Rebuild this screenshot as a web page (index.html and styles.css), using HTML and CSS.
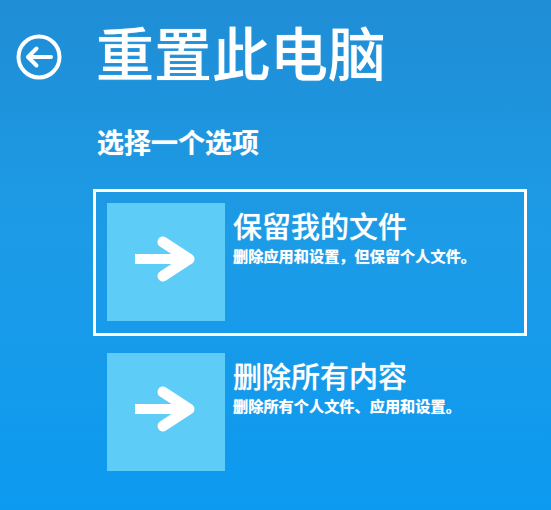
FILE: index.html
```html
<!DOCTYPE html>
<html lang="zh-CN">
<head>
<meta charset="utf-8">
<title>重置此电脑</title>
<link rel="stylesheet" href="styles.css">
</head>
<body>
<div class="page">
  <div class="header">
    <svg class="back" width="48" height="48" viewBox="0 0 48 48">
      <circle cx="24" cy="24" r="20.5" fill="none" stroke="#fff" stroke-width="4"/>
      <path d="M13 24 H36 M21.5 15.5 L13 24 L21.5 32.5" fill="none" stroke="#fff" stroke-width="4" stroke-linecap="round" stroke-linejoin="round"/>
    </svg>
    <h1 class="title">重置此电脑</h1>
  </div>
  <div class="subtitle">选择一个选项</div>
  <div class="options">
    <div class="option selected">
      <div class="tile">
        <svg width="118" height="118" viewBox="0 0 118 118">
          <path d="M28 56 H82" fill="none" stroke="#fff" stroke-width="10"/>
          <path d="M56 39 L82 56 L56 73" fill="none" stroke="#fff" stroke-width="11" stroke-linecap="round" stroke-linejoin="round"/>
        </svg>
      </div>
      <div class="text">
        <div class="opt-title">保留我的文件</div>
        <div class="opt-desc">删除应用和设置，但保留个人文件。</div>
      </div>
    </div>
    <div class="option">
      <div class="tile">
        <svg width="118" height="118" viewBox="0 0 118 118">
          <path d="M28 56 H82" fill="none" stroke="#fff" stroke-width="10"/>
          <path d="M56 39 L82 56 L56 73" fill="none" stroke="#fff" stroke-width="11" stroke-linecap="round" stroke-linejoin="round"/>
        </svg>
      </div>
      <div class="text">
        <div class="opt-title">删除所有内容</div>
        <div class="opt-desc">删除所有个人文件、应用和设置。</div>
      </div>
    </div>
  </div>
</div>
</body>
</html>
```
FILE: styles.css
```css
html, body {
  margin: 0;
  padding: 0;
}
body {
  width: 551px;
  height: 510px;
  overflow: hidden;
  background: linear-gradient(180deg, #1f8dd5 0%, #1d9be6 45%, #0c9af0 100%);
  font-family: "Noto Sans CJK SC", "Noto Sans", sans-serif;
  color: #fff;
}
.page {
  display: flex;
  flex-direction: column;
}
.header {
  display: flex;
  align-items: flex-start;
  padding-top: 22px;
}
.back {
  margin-left: 15px;
  margin-top: 11px;
  flex: none;
}
.title {
  margin: 0 0 0 33px;
  font-size: 58px;
  line-height: 1;
  font-weight: 500;
  text-shadow: 0 0 1px rgba(255,255,255,0.6);
}
.subtitle {
  margin: 47px 0 0 97px;
  font-size: 27px;
  line-height: 1;
  font-weight: 700;
  text-shadow: 0 0 1px rgba(255,255,255,0.6);
}
.options {
  margin: 34px 0 0 93px;
  display: flex;
  flex-direction: column;
  gap: 3px;
}
.option {
  width: 434px;
  height: 147px;
  box-sizing: border-box;
  border: 3px solid transparent;
  padding: 11px 0 0 11px;
  display: flex;
  gap: 8px;
}
.option.selected {
  border-color: #fff;
}
.tile {
  width: 118px;
  height: 118px;
  background: #5dcdf7;
  flex: none;
}
.tile svg {
  display: block;
}
.text {
  padding-top: 8px;
  display: flex;
  flex-direction: column;
}
.opt-title {
  font-size: 29px;
  line-height: 1;
  font-weight: 500;
  text-shadow: 0 0 1px rgba(255,255,255,0.6);
}
.opt-desc {
  margin-top: 8px;
  font-size: 15.2px;
  line-height: 1;
  font-weight: 700;
  text-shadow: 0 0 1px rgba(255,255,255,0.7);
}
```
